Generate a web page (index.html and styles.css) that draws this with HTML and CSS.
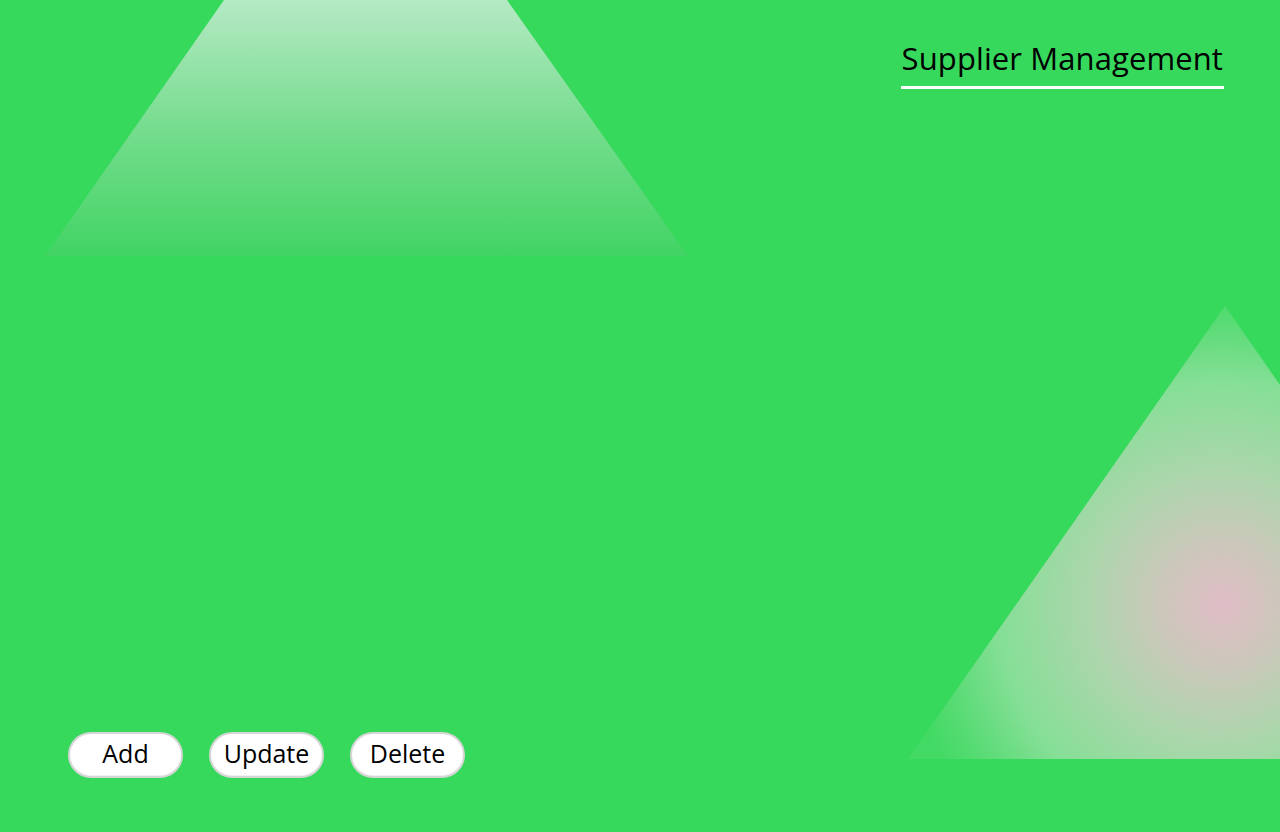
FILE: index.html
```html
<!DOCTYPE html>
<html lang="en">
<head>
<meta charset="utf-8">
<title>Supplier Management</title>
<link rel="stylesheet" href="styles.css">
</head>
<body>
<svg class="backdrop" width="1280" height="832" viewBox="0 0 1280 832" aria-hidden="true">
  <defs>
    <linearGradient id="topFade" gradientUnits="userSpaceOnUse" x1="0" y1="0" x2="0" y2="256">
      <stop offset="0" stop-color="#b5e9c4"/>
      <stop offset="0.5" stop-color="#76dd8e"/>
      <stop offset="1" stop-color="#41d464"/>
    </linearGradient>
    <radialGradient id="glow" gradientUnits="userSpaceOnUse" cx="1222" cy="605" r="320">
      <stop offset="0" stop-color="#e0bcc6"/>
      <stop offset="0.2" stop-color="#cbc8ba"/>
      <stop offset="0.45" stop-color="#a8d7aa"/>
      <stop offset="0.7" stop-color="#85df96"/>
      <stop offset="0.9" stop-color="#55db72"/>
      <stop offset="1" stop-color="#42da64"/>
    </radialGradient>
  </defs>
  <polygon points="224,0 507,0 688,256 45,256" fill="url(#topFade)"/>
  <polygon points="1225,306 1540,759 908,759" fill="url(#glow)"/>
</svg>
<main class="page">
  <header class="header">
    <h1 class="title">Supplier Management</h1>
  </header>
  <div class="actions">
    <button class="btn" type="button">Add</button>
    <button class="btn" type="button">Update</button>
    <button class="btn" type="button">Delete</button>
  </div>
</main>
</body>
</html>
```
FILE: styles.css
```css
html, body {
  margin: 0;
  padding: 0;
}
body {
  width: 1280px;
  height: 832px;
  background: #37d95d;
  overflow: hidden;
  position: relative;
  font-family: "Open Sans", "DejaVu Sans", sans-serif;
}
.backdrop {
  position: absolute;
  left: 0;
  top: 0;
  z-index: 0;
}
.page {
  position: relative;
  z-index: 1;
  height: 832px;
  display: flex;
  flex-direction: column;
  justify-content: space-between;
  box-sizing: border-box;
  padding: 36px 56px 54px 68px;
}
.header {
  display: flex;
  justify-content: flex-end;
}
.title {
  margin: 0;
  font-weight: 400;
  font-size: 31px;
  line-height: 44px;
  color: #000;
  border-bottom: 3px solid #fff;
  padding: 0 1px 6px 1px;
  letter-spacing: 0.1px;
}
.actions {
  display: flex;
  gap: 26px;
}
.btn {
  width: 115px;
  height: 46px;
  border-radius: 23px;
  background: #fff;
  border: 2px solid #d6d6d6;
  box-shadow: inset 0 -1px 1px rgba(0,0,0,0.06);
  font-family: "Open Sans", "DejaVu Sans", sans-serif;
  font-size: 25px;
  color: #000;
  padding: 0 0 4px 0;
  line-height: 36px;
}
```
